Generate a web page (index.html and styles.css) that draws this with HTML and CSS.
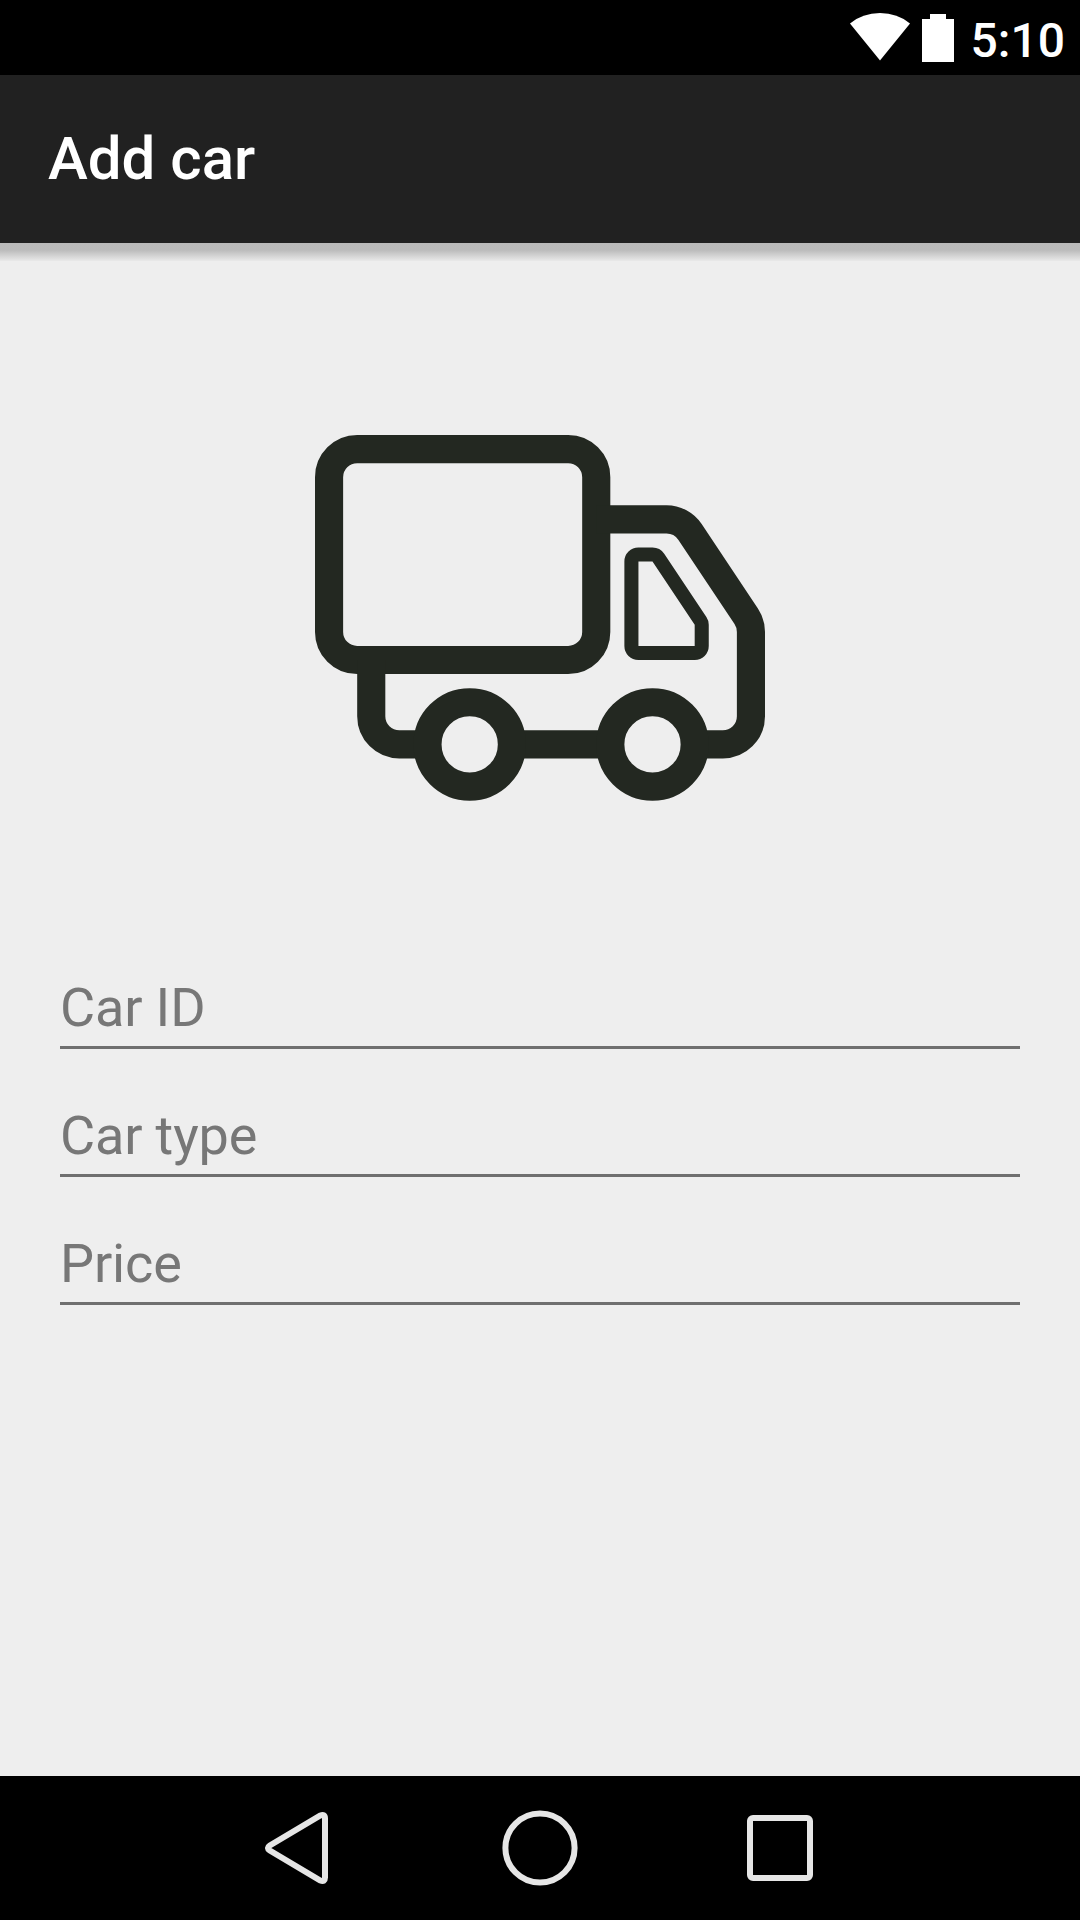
FILE: index.html
```html
<!DOCTYPE html>
<html lang="en">
<head>
<meta charset="utf-8">
<title>Add car</title>
<link rel="stylesheet" href="styles.css">
</head>
<body>
<div class="screen">
  <div class="status-bar">
    <svg class="wifi" viewBox="0 0 60 48"><path d="M0 10.500Q12.500 0 30 0T60 10.500L30 47.500Z"/></svg>
    <svg class="battery" viewBox="0 0 32 48"><path d="M8 0H24V5H32V48H0V5H8Z"/></svg>
    <span class="clock">5:10</span>
  </div>
  <header class="app-bar"><h1 class="title">Add car</h1></header>
  <main class="content">
    <svg class="truck" viewBox="0 0 32 26">
      <rect x="1" y="1" width="19" height="15" rx="2"/>
      <path d="M20 6H25A2 2 0 0 1 26.664 6.891L30.664 12.891A2 2 0 0 1 31 14V20A2 2 0 0 1 29 22H27M21 22H14M8 22H6A2 2 0 0 1 4 20V16"/>
      <circle cx="11" cy="22" r="3"/>
      <circle cx="24" cy="22" r="3"/>
      <path class="window" d="M22.500 9A.5 .5 0 0 1 23 8.500H24A.5 .5 0 0 1 24.416 8.723L27.416 13.223A.5 .5 0 0 1 27.500 13.500V15A.5 .5 0 0 1 27 15.500H23A.5 .5 0 0 1 22.500 15Z"/>
    </svg>
    <form class="form">
      <input class="field" type="text" placeholder="Car ID">
      <input class="field" type="text" placeholder="Car type">
      <input class="field" type="text" placeholder="Price">
    </form>
  </main>
  <nav class="nav-bar">
    <svg class="nav-icon" viewBox="0 0 84 84"><path d="M11.800 39.500L62.300 9.500Q67 7.800 67 12.500V71.500Q67 76.200 62.300 74.500L11.800 44.500Q8 42 11.800 39.500Z"/></svg>
    <svg class="nav-icon" viewBox="0 0 84 84"><circle cx="42" cy="42" r="34.600"/></svg>
    <svg class="nav-icon" viewBox="0 0 84 84"><rect x="12" y="12" width="60" height="60" rx="3"/></svg>
  </nav>
</div>
</body>
</html>
```
FILE: styles.css
```css
* {
  box-sizing: border-box;
}

body {
  margin: 0;
  font-family: Roboto, sans-serif;
}

.screen {
  display: flex;
  flex-direction: column;
  width: 1080px;
  height: 1920px;
  background: #eee;
  overflow: hidden;
}

.status-bar {
  display: flex;
  align-items: flex-start;
  justify-content: flex-end;
  height: 75px;
  padding: 13px 15px 0 0;
  background: #000;
  color: #fff;
  fill: #fff;
}

.wifi {
  width: 60px;
  height: 48px;
  margin-right: 12px;
}

.battery {
  width: 32px;
  height: 48px;
  margin: 1px 17px 0 0;
}

.clock {
  font-size: 48px;
  font-weight: 500;
  line-height: 56px;
}

.app-bar {
  display: flex;
  align-items: center;
  height: 168px;
  padding: 0 48px;
  background: #212121;
}

.title {
  margin: 0;
  color: #fff;
  font-size: 60px;
  font-weight: 500;
  line-height: 70px;
}

.content {
  flex: 1;
  display: flex;
  flex-direction: column;
  align-items: center;
  padding: 192px 60px 0;
  background: linear-gradient(#bababa 0, #bbb 7px, #ccc 11px, #e9e9e9 18px, #eee 18px);
}

.truck {
  width: 450px;
  height: 365.625px;
  fill: none;
  stroke: #232821;
  stroke-width: 2;
}

.window {
  stroke-width: 1;
}

.form {
  display: flex;
  flex-direction: column;
  gap: 48px;
  width: 100%;
  margin-top: 168.375px;
}

.field {
  width: 100%;
  height: 80px;
  padding: 0 0 1px;
  border: 0;
  border-bottom: 3px solid #6f6f6f;
  border-radius: 0;
  outline: 0;
  background: transparent;
  color: #212121;
  font: 400 54px/64px Roboto, sans-serif;
  letter-spacing: -0.15px;
}

.field::placeholder {
  color: #777;
  opacity: 1;
}

.nav-bar {
  display: flex;
  align-items: center;
  justify-content: center;
  gap: 156px;
  height: 144px;
  background: #000;
}

.nav-icon {
  width: 84px;
  height: 84px;
  fill: none;
  stroke: #e6e6e6;
  stroke-width: 6;
}
```
